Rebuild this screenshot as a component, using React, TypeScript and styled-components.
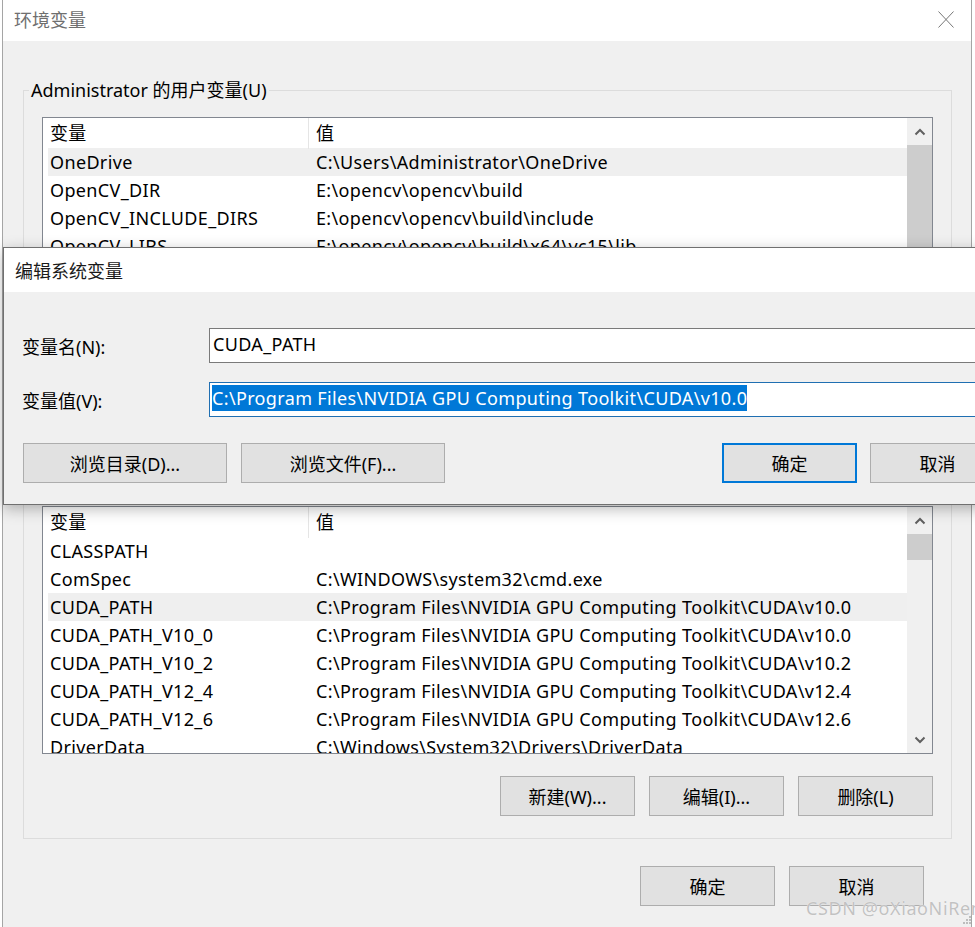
import React from "react";
import styled, { createGlobalStyle } from "styled-components";

const GlobalStyle = createGlobalStyle`
  html, body {
    margin: 0;
    padding: 0;
    background: #fff;
    overflow: hidden;
  }
  body {
    font-family: "Noto Sans", "Noto Sans CJK SC", sans-serif;
    color: #000;
  }
  * { box-sizing: border-box; }
`;

const Screen = styled.div`
  position: relative;
  width: 975px;
  height: 927px;
  overflow: hidden;
  background: #fff;
`;

const MainWindow = styled.div`
  margin-left: 2px;
  width: 970px;
  height: 927px;
  border-left: 1px solid #a5a5a5;
  border-right: 1px solid #a5a5a5;
  background: #f0f0f0;
`;

const TitleBar = styled.div<{ $height: number; $inactive?: boolean }>`
  height: ${(p) => p.$height}px;
  background: #fff;
  display: flex;
  align-items: center;
  justify-content: space-between;
  padding: 0 17px ${(p) => (p.$inactive ? 3 : 0)}px 11px;
  font-size: 18px;
  color: ${(p) => (p.$inactive ? "#6f6f6f" : "#1a1a1a")};
`;

const CloseIcon = () => (
  <svg width="16" height="17" viewBox="0 0 16 17">
    <path d="M0.5 0.5 L15.5 16.5 M15.5 0.5 L0.5 16.5" stroke="#777" strokeWidth="1" fill="none" />
  </svg>
);

const WindowBody = styled.div`
  padding: 37px 19px 0 20px;
  letter-spacing: 0.35px;
`;

const Group = styled.fieldset<{ $gap?: number }>`
  margin: ${(p) => p.$gap ?? 0}px 0 0 0;
  padding: 0 18px 22px 18px;
  border: 1px solid #dcdcdc;
  min-width: 0;
`;

const Legend = styled.legend`
  margin-left: -13px;
  padding: 0 2px;
  font-size: 18px;
  line-height: 24px;
  letter-spacing: 0;
`;

const ListView = styled.div`
  margin-top: 15px;
  height: 248px;
  border: 1px solid #828790;
  background: #fff;
  display: flex;
  overflow: hidden;
`;

const Table = styled.div`
  flex: 1;
  min-width: 0;
  overflow: hidden;
`;

const HeaderRow = styled.div`
  display: grid;
  grid-template-columns: 266px 1fr;
  height: 30px;
  font-size: 18px;
  line-height: 31px;
`;

const HeaderCell = styled.div<{ $divider?: boolean }>`
  padding-left: 7px;
  border-right: ${(p) => (p.$divider ? "1px solid #e5e5e5" : "none")};
`;

const Row = styled.div<{ $selected?: boolean }>`
  display: grid;
  grid-template-columns: 261px 1fr;
  margin-left: 5px;
  height: 28px;
  line-height: 28px;
  font-size: 18px;
  white-space: nowrap;
  background: ${(p) => (p.$selected ? "#efefef" : "transparent")};
`;

const Cell = styled.div<{ $pad: number }>`
  padding-left: ${(p) => p.$pad}px;
  overflow: hidden;
`;

const ScrollBar = styled.div`
  width: 25px;
  background: #f0f0f0;
  display: flex;
  flex-direction: column;
`;

const ScrollArrow = styled.div`
  height: 27px;
  flex: none;
  display: flex;
  align-items: center;
  justify-content: center;
`;

const ScrollTrack = styled.div`
  flex: 1;
  min-height: 0;
  overflow: hidden;
`;

const Thumb = styled.div<{ $top: number; $height: number }>`
  margin-top: ${(p) => p.$top}px;
  height: ${(p) => p.$height}px;
  background: #cdcdcd;
`;

const Chevron = ({ down }: { down?: boolean }) => (
  <svg width="12" height="8" viewBox="0 0 12 8">
    <polyline
      points={down ? "1.5,1.5 6,6 10.5,1.5" : "1.5,6.5 6,2 10.5,6.5"}
      fill="none"
      stroke="#606060"
      strokeWidth="2"
    />
  </svg>
);

const ButtonRow = styled.div<{ $top: number; $right?: number }>`
  display: flex;
  justify-content: flex-end;
  gap: 14px;
  margin-top: ${(p) => p.$top}px;
  padding-right: ${(p) => p.$right ?? 0}px;
`;

const Button = styled.button<{ $width?: number; $default?: boolean }>`
  width: ${(p) => p.$width ?? 135}px;
  height: 40px;
  flex: none;
  background: #e1e1e1;
  border: ${(p) => (p.$default ? "2px solid #0078d7" : "1px solid #adadad")};
  font-family: inherit;
  font-size: 18px;
  letter-spacing: 0;
  color: #000;
  padding: 0;
`;

const Dialog = styled.div`
  position: absolute;
  left: 3px;
  top: 247px;
  width: 1021px;
  border: 1px solid #707070;
  background: #f0f0f0;
  box-shadow: 0 4px 14px rgba(0, 0, 0, 0.28);
`;

const DialogBody = styled.div`
  padding: 36px 18px 21px 18px;
  display: flex;
  flex-direction: column;
  gap: 19px;
`;

const FieldRow = styled.div`
  display: grid;
  grid-template-columns: 187px 1fr;
  align-items: center;
  font-size: 18px;
`;

const FieldLabel = styled.label`
  padding-top: 0;
`;

const TextBox = styled.div<{ $focused?: boolean }>`
  height: 35px;
  background: #fff;
  border: 1px solid ${(p) => (p.$focused ? "#1f6fb2" : "#7a7a7a")};
  padding: 1px 0 0 ${(p) => (p.$focused ? 2 : 3)}px;
  line-height: 28px;
  letter-spacing: 0.35px;
  white-space: nowrap;
  overflow: hidden;
`;

const Selection = styled.span`
  background: #0078d7;
  color: #fff;
  padding: 1px 0;
`;

const DialogButtons = styled.div`
  display: flex;
  justify-content: space-between;
  margin-top: 7px;
  padding-left: 1px;
`;

const ButtonGroup = styled.div<{ $gap: number }>`
  display: flex;
  gap: ${(p) => p.$gap}px;
`;

const Watermark = styled.div`
  position: absolute;
  left: 806px;
  top: 896px;
  font-family: "Noto Sans", sans-serif;
  font-size: 18px;
  letter-spacing: 0.6px;
  color: #c2c2c2;
  white-space: nowrap;
  text-shadow: 0 0 1px #fff;
`;

const Grip = styled.svg`
  position: absolute;
  right: 3px;
  bottom: 2px;
`;

type Variable = { name: string; value: string; selected?: boolean };

const userVars: Variable[] = [
  { name: "OneDrive", value: "C:\\Users\\Administrator\\OneDrive", selected: true },
  { name: "OpenCV_DIR", value: "E:\\opencv\\opencv\\build" },
  { name: "OpenCV_INCLUDE_DIRS", value: "E:\\opencv\\opencv\\build\\include" },
  { name: "OpenCV_LIBS", value: "E:\\opencv\\opencv\\build\\x64\\vc15\\lib" },
  { name: "Path", value: "C:\\Users\\Administrator\\AppData\\Local\\Microsoft\\WindowsApps;" },
  { name: "TEMP", value: "C:\\Users\\Administrator\\AppData\\Local\\Temp" },
  { name: "TMP", value: "C:\\Users\\Administrator\\AppData\\Local\\Temp" },
];

const cuda = "C:\\Program Files\\NVIDIA GPU Computing Toolkit\\CUDA\\";

const systemVars: Variable[] = [
  { name: "CLASSPATH", value: "" },
  { name: "ComSpec", value: "C:\\WINDOWS\\system32\\cmd.exe" },
  { name: "CUDA_PATH", value: cuda + "v10.0", selected: true },
  { name: "CUDA_PATH_V10_0", value: cuda + "v10.0" },
  { name: "CUDA_PATH_V10_2", value: cuda + "v10.2" },
  { name: "CUDA_PATH_V12_4", value: cuda + "v12.4" },
  { name: "CUDA_PATH_V12_6", value: cuda + "v12.6" },
  { name: "DriverData", value: "C:\\Windows\\System32\\Drivers\\DriverData" },
  { name: "NUMBER_OF_PROCESSORS", value: "16" },
];

const VariableList = ({
  rows,
  thumbTop,
  thumbHeight,
}: {
  rows: Variable[];
  thumbTop: number;
  thumbHeight: number;
}) => (
  <ListView>
    <Table>
      <HeaderRow>
        <HeaderCell $divider>变量</HeaderCell>
        <HeaderCell>值</HeaderCell>
      </HeaderRow>
      {rows.map((r) => (
        <Row key={r.name} $selected={r.selected}>
          <Cell $pad={2}>{r.name}</Cell>
          <Cell $pad={7}>{r.value}</Cell>
        </Row>
      ))}
    </Table>
    <ScrollBar>
      <ScrollArrow>
        <Chevron />
      </ScrollArrow>
      <ScrollTrack>
        <Thumb $top={thumbTop} $height={thumbHeight} />
      </ScrollTrack>
      <ScrollArrow>
        <Chevron down />
      </ScrollArrow>
    </ScrollBar>
  </ListView>
);

export default function App() {
  return (
    <Screen>
      <GlobalStyle />
      <MainWindow>
        <TitleBar $height={41} $inactive>
          <span>环境变量</span>
          <CloseIcon />
        </TitleBar>
        <WindowBody>
          <Group>
            <Legend>Administrator 的用户变量(U)</Legend>
            <VariableList rows={userVars} thumbTop={0} thumbHeight={150} />
            <ButtonRow $top={23}>
              <Button>新建(N)...</Button>
              <Button>编辑(E)...</Button>
              <Button>删除(D)</Button>
            </ButtonRow>
          </Group>
          <Group $gap={16}>
            <Legend>系统变量(S)</Legend>
            <VariableList rows={systemVars} thumbTop={0} thumbHeight={26} />
            <ButtonRow $top={22}>
              <Button>新建(W)...</Button>
              <Button>编辑(I)...</Button>
              <Button>删除(L)</Button>
            </ButtonRow>
          </Group>
          <ButtonRow $top={27} $right={28}>
            <Button>确定</Button>
            <Button>取消</Button>
          </ButtonRow>
        </WindowBody>
      </MainWindow>

      <Dialog>
        <TitleBar $height={44}>
          <span>编辑系统变量</span>
        </TitleBar>
        <DialogBody>
          <FieldRow>
            <FieldLabel>变量名(N):</FieldLabel>
            <TextBox>CUDA_PATH</TextBox>
          </FieldRow>
          <FieldRow>
            <FieldLabel>变量值(V):</FieldLabel>
            <TextBox $focused>
              <Selection>{cuda + "v10.0"}</Selection>
            </TextBox>
          </FieldRow>
          <DialogButtons>
            <ButtonGroup $gap={14}>
              <Button $width={204}>浏览目录(D)...</Button>
              <Button $width={204}>浏览文件(F)...</Button>
            </ButtonGroup>
            <ButtonGroup $gap={13}>
              <Button $default>确定</Button>
              <Button>取消</Button>
            </ButtonGroup>
          </DialogButtons>
        </DialogBody>
      </Dialog>

      <Watermark>CSDN @oXiaoNiRen</Watermark>
      <Grip width="10" height="10" viewBox="0 0 10 10">
        {[
          [8, 2],
          [5, 5],
          [8, 5],
          [2, 8],
          [5, 8],
          [8, 8],
        ].map(([x, y]) => (
          <rect key={`${x}-${y}`} x={x - 1} y={y - 1} width="2" height="2" fill="#bdbdbd" />
        ))}
      </Grip>
    </Screen>
  );
}
